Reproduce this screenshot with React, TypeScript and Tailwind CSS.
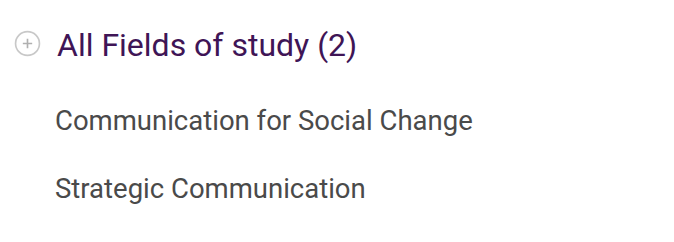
export default function App() {
  const fields = ["Communication for Social Change", "Strategic Communication"];

  return (
    <div className="w-[674px] h-[242px] bg-white font-['Roboto',sans-serif]">
      <div className="flex items-center pl-[14px] pt-[26px]">
        <svg width="27" height="27" viewBox="0 0 26 26" className="shrink-0 -mt-[3px]">
          <circle cx="13" cy="13" r="11.5" fill="none" stroke="#c8c8c8" strokeWidth="1.6" />
          <path d="M13 8.5v9M8.5 13h9" stroke="#b0b0b0" strokeWidth="1.6" />
        </svg>
        <h2 className="ml-[16px] text-[32px] leading-[38px] text-[#3f1556]">All Fields of study (2)</h2>
      </div>
      <ul className="mt-[40px] pl-[55px] flex flex-col gap-[34px]">
        {fields.map((f) => (
          <li key={f} className="text-[27.5px] leading-[34px] text-[#4a4a4a]">
            {f}
          </li>
        ))}
      </ul>
    </div>
  );
}
